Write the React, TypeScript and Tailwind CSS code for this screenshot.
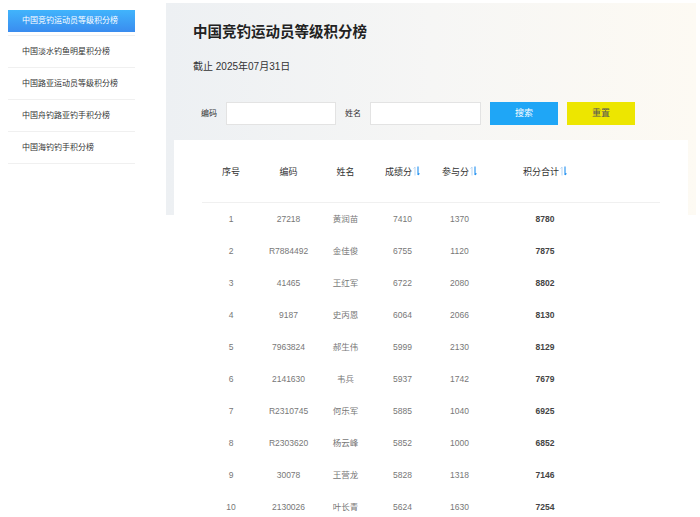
import { useState } from 'react'

const menus = [
  '中国竞钓运动员等级积分榜',
  '中国淡水钓鱼明星积分榜',
  '中国路亚运动员等级积分榜',
  '中国舟钓路亚钓手积分榜',
  '中国海钓钓手积分榜',
]

const rows = [
  ['1', '27218', '黄润苗', '7410', '1370', '8780'],
  ['2', 'R7884492', '金佳俊', '6755', '1120', '7875'],
  ['3', '41465', '王红军', '6722', '2080', '8802'],
  ['4', '9187', '史丙恩', '6064', '2066', '8130'],
  ['5', '7963824', '郝生伟', '5999', '2130', '8129'],
  ['6', '2141630', '韦兵', '5937', '1742', '7679'],
  ['7', 'R2310745', '何乐军', '5885', '1040', '6925'],
  ['8', 'R2303620', '杨云峰', '5852', '1000', '6852'],
  ['9', '30078', '王营龙', '5828', '1318', '7146'],
  ['10', '2130026', '叶长青', '5624', '1630', '7254'],
]

const cols = 'grid grid-cols-[58px_57px_57px_57px_57px_114px_1fr]'

function SortIcon() {
  return (
    <svg width="7" height="10" viewBox="0 0 7 10" className="ml-[1px] -mt-[3px]">
      <path d="M2 9.5V1M0.6 2.6L2 1" stroke="#b9d6f2" strokeWidth="1" fill="none" />
      <path d="M5 0.5V9M6.4 7.4L5 9" stroke="#1d8ff0" strokeWidth="1.1" fill="none" />
    </svg>
  )
}

export default function App() {
  const [active] = useState(0)
  const [code, setCode] = useState('')
  const [name, setName] = useState('')

  return (
    <div
      className="flex w-[700px] h-[517px] overflow-hidden bg-white"
      style={{ fontFamily: '"Liberation Sans", "Noto Sans CJK SC", sans-serif' }}
    >
      {/* 左侧菜单 */}
      <div className="ml-[8px] mt-[4px] w-[127px] shrink-0">
        {menus.map((m, i) => (
          <div key={m} className="h-[32px] flex items-center border-b border-[#f0f0f0]">
            {i === active ? (
              <div className="w-full h-[22px] mt-[2px] flex items-center pl-[14px] text-[8px] text-white bg-gradient-to-b from-[#41b4fc] to-[#3a8cef]">
                {m}
              </div>
            ) : (
              <div className="pl-[14px] text-[8px] text-[#333]">{m}</div>
            )}
          </div>
        ))}
      </div>

      {/* 右侧内容 */}
      <div className="ml-[31px] mt-[3px] w-[530px] shrink-0">
        <div className="h-[212px] bg-gradient-to-r from-[#edf0f3] via-[#f6f6f5] to-[#fdfaf3] pt-[19px] px-[27px]">
          <h1 className="text-[14.5px] font-bold text-[#222] leading-[20px]">中国竞钓运动员等级积分榜</h1>
          <div className="mt-[18px] text-[10px] text-[#333] leading-[14px]">截止 2025年07月31日</div>
          <div className="mt-[28px] flex items-center pl-[8px] text-[8px] text-[#333]">
            <span>编码</span>
            <input
              value={code}
              onChange={(e) => setCode(e.target.value)}
              className="ml-[9px] w-[110px] h-[23px] bg-white border border-[#e3e3e3] outline-none"
            />
            <span className="ml-[9px]">姓名</span>
            <input
              value={name}
              onChange={(e) => setName(e.target.value)}
              className="ml-[9px] w-[111px] h-[23px] bg-white border border-[#e3e3e3] outline-none"
            />
            <button className="ml-[9px] w-[68px] h-[23px] bg-[#1fa6f6] text-white text-[9px]">搜索</button>
            <button className="ml-[9px] w-[68px] h-[23px] bg-[#ede600] text-[#555] text-[9px]">重置</button>
          </div>
        </div>

        <div className="mx-[8px] -mt-[75px] relative bg-white h-[400px] px-[28px]">
          <div className={`${cols} h-[63px] pt-[3px] items-center border-b border-[#f0f0f0] text-[9px] text-[#333]`}>
            <div className="text-center">序号</div>
            <div className="text-center">编码</div>
            <div className="text-center">姓名</div>
            <div className="flex justify-center items-center">成绩分<SortIcon /></div>
            <div className="flex justify-center items-center">参与分<SortIcon /></div>
            <div className="flex justify-center items-center">积分合计<SortIcon /></div>
            <div />
          </div>
          {rows.map((r) => (
            <div key={r[0]} className={`${cols} h-[32px] items-center text-[8.5px] text-[#777]`}>
              <div className="text-center">{r[0]}</div>
              <div className="text-center">{r[1]}</div>
              <div className="text-center">{r[2]}</div>
              <div className="text-center">{r[3]}</div>
              <div className="text-center">{r[4]}</div>
              <div className="text-center font-bold text-[#444]">{r[5]}</div>
              <div />
            </div>
          ))}
        </div>
      </div>
    </div>
  )
}
